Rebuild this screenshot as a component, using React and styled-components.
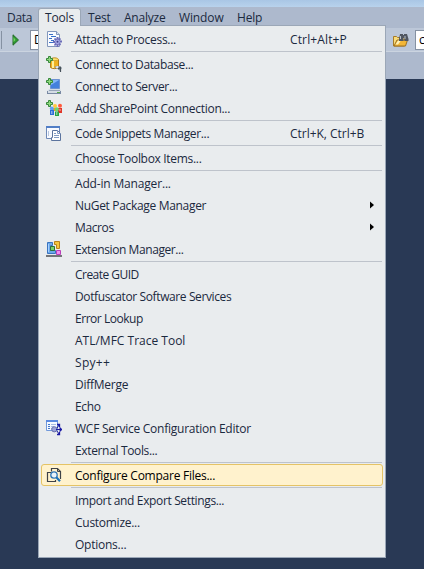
import React from 'react';
import styled, { createGlobalStyle } from 'styled-components';

const GlobalStyle = createGlobalStyle`
  * { box-sizing: border-box; }
  body { margin: 0; overflow: hidden; background: #293955; }
`;

const Window = styled.div`
  position: relative;
  width: 424px;
  height: 569px;
  overflow: hidden;
  background: #293955;
  color: #1b293e;
  font: 12px/22px 'Open Sans', 'Noto Sans', sans-serif;
  white-space: pre;
`;

const TitleStrip = styled.div`
  height: 7px;
  background: linear-gradient(#a9c6e5, #b8d2ec);
`;

const MenuBar = styled.nav`
  display: flex;
  height: 21px;
  padding-top: 1px;
  background: #adb9cd;
`;

const MenuTitle = styled.div`
  width: ${(p) => p.$width}px;
  height: 20px;
  padding-left: 6px;
  line-height: 17px;
  letter-spacing: ${(p) => p.$spacing}px;
  border: 1px solid ${(p) => (p.$open ? '#9ba7b7' : 'transparent')};
  border-bottom: 0;
  border-radius: 3px 3px 0 0;
  background: ${(p) => (p.$open ? '#e9ecee' : 'transparent')};
`;

const ToolBar = styled.div`
  display: flex;
  align-items: center;
  justify-content: space-between;
  height: 24px;
  background: #bcc7d8;
  border-bottom: 1px solid #cbd4e0;
`;

const ToolGroup = styled.div`
  display: flex;
  align-items: center;
  gap: ${(p) => p.$gap}px;
`;

const Divider = styled.div`
  width: 1px;
  height: 18px;
  margin-left: 1px;
  background: #8591a2;
`;

const ComboBox = styled.div`
  width: ${(p) => p.$width}px;
  height: 20px;
  padding-left: 3px;
  overflow: hidden;
  border: 1px solid #8591a2;
  border-right: 0;
  background: #fff;
  color: #000;
  line-height: 18px;
`;

const ToolShelf = styled.div`
  height: 27px;
  background: #adb9cd;
`;

const Menu = styled.div`
  position: absolute;
  left: 38px;
  top: 25px;
  width: 348px;
  height: 533px;
  padding: 2px;
  border: 1px solid #9ba7b7;
  background: #e9ecee;
`;

const TabJoin = styled.div`
  position: absolute;
  left: 0;
  top: -1px;
  width: 41px;
  height: 1px;
  background: #e9ecee;
`;

const Row = styled.div`
  display: grid;
  grid-template-columns: 16px 215px 1fr;
  grid-template-rows: 100%;
  column-gap: 13px;
  align-items: center;
  height: 22px;
  padding-left: ${(p) => (p.$active ? 4 : 5)}px;
  border: ${(p) => (p.$active ? '1px solid #e5c365' : '0')};
  border-radius: 3px;
  background: ${(p) => (p.$active ? '#fff2cd' : 'transparent')};
  color: ${(p) => (p.$active ? '#000' : 'inherit')};
`;

const Label = styled.span`
  padding-top: 2px;
  line-height: 20px;
  letter-spacing: ${(p) => p.$spacing}px;
`;

const Shortcut = styled(Label)`
  margin-left: -13px;
`;

const Separator = styled.div`
  height: 1px;
  margin: 1px 1px 1px 30px;
  background: #bec3cb;
`;

const Svg = styled.svg`
  display: block;
`;

const Arrow = styled(Svg)`
  margin-left: 67px;
`;

const Plus = () => (
  <path d="M2.5.5h2v2h2v2h-2v2h-2v-2h-2v-2h2z" fill="#8fda7d" stroke="#36873a" />
);

const icons = {
  attach: (
    <>
      <path d="M1.5.5h9l3 3v12h-12z" fill="#f9fbff" stroke="#8297bd" />
      <path d="M10.5.5v3h3" fill="#d7dfed" stroke="#8297bd" />
      <path d="M3 3.5h4M5 5.5h5M3 7.5h3M5 9.5h3M3 11.5h4" stroke="#3870c8" />
      <path d="M10.5 6h2v1.5l1.5-.5 1 1-1 1.5h2v2h-2l1 2-1 1-1.5-1V16h-2v-2.5L9 15l-1-1 1-2H7v-2h2L8 8l1-1 1.5 1z" fill="#6b6cb8" />
      <circle cx="11.5" cy="10.8" r="2.4" fill="#a5a9e4" />
      <circle cx="11.5" cy="10.8" r="1" fill="#41428d" />
    </>
  ),
  database: (
    <>
      <path d="M4.5 3.5c1-2 7-2 8 0v8c-2 1.5-6 1.5-8 0z" fill="#efb321" stroke="#b27b17" />
      <path d="M6 5h2v7H6z" fill="#fff09b" />
      <ellipse cx="8.5" cy="3.3" rx="3.8" ry="1.3" fill="#ffe378" stroke="#c99a27" strokeWidth=".7" />
      <path d="M8 11l2-1h4l2 2-2 3-2-2z" fill="#8b969f" />
      <path d="M9.5 11l2-1 1 1-1.5 1.5z" fill="#eef1f4" />
      <path d="M12 13l3-2M14.5 12v4" stroke="#46515a" strokeWidth="1.2" />
      <Plus />
    </>
  ),
  server: (
    <>
      <path d="M4.5 1.5h9v9h-9z" fill="#4480dc" stroke="#6d93d2" />
      <path d="M5 2h8L5 7z" fill="#85b7f5" />
      <path d="M3 11h11l1 2v3H1v-3z" fill="#d4dce5" />
      <path d="M1 15.5h14M1.5 13v2M14.5 13v2" stroke="#7989a3" />
      <path d="M3 12.5h11" stroke="#96a5b9" />
      <path d="M11 14.5h3" stroke="#55a949" />
      <Plus />
    </>
  ),
  sharepoint: (
    <>
      <circle cx="14" cy="5.8" r="2" fill="#ff5a3c" />
      <path d="M12 8h4v5h-4z" fill="#e03628" />
      <circle cx="9" cy="6" r="2" fill="#ffc83b" />
      <path d="M7 8h4v3H7z" fill="#e8a723" />
      <circle cx="5.8" cy="8.5" r="2" fill="#5da1f6" />
      <path d="M4 10h4v5H4z" fill="#2c6cd6" />
      <circle cx="10.8" cy="9.3" r="2" fill="#6ed374" />
      <path d="M9 11.5h4V16H9z" fill="#26a343" />
      <path d="M5.8 11v3M10.8 12v3M14 9v2" stroke="#fff" strokeOpacity=".65" />
      <Plus />
    </>
  ),
  snippets: (
    <>
      <path d="M.5 1.5h13v12H.5z" fill="#f8faff" stroke="#6e89b7" />
      <path d="M0 1h14v2H0z" fill="#517ec6" />
      <path d="M2.5 6v5" stroke="#b8c7df" />
      <path d="M6.5 5.5h5l3 3v7h-9v-3h1z" fill="#fff" stroke="#5c749e" />
      <path d="M11.5 5.5v3h3M8 8.5h2M8 10.5h5M8 12.5h5" stroke="#839cc4" />
    </>
  ),
  extension: (
    <>
      <path d="M1.5 1.5h5v3h-2v5h5v3h-8z" fill="#6ca8ea" stroke="#3a74c0" />
      <path d="M2.5 3v8" stroke="#a6d1ff" />
      <path d="M8.5.5h5v7h-3v-4h-2z" fill="#f4c63f" stroke="#b9831a" />
      <path d="M4.5 5.5h4v4h-4z" fill="#76d16d" stroke="#2c713a" />
      <path d="M10.5 9.5h4v4h-4z" fill="#f292f0" stroke="#ba3eba" />
      <path d="M0 14h16v2H0z" fill="#737579" />
    </>
  ),
  wcf: (
    <>
      <path d="M.5.5h11v10H.5z" fill="#f5f9ff" stroke="#7199db" />
      <path d="M0 0h12v2H0z" fill="#5b8ae0" />
      <path d="M2 4.5h2M2 6.5h2M2 8.5h2" stroke="#4277cb" />
      <path d="M5 4.5h5M5 6.5h3M5 8.5h3" stroke="#a7bde5" />
      <circle cx="8.3" cy="9.3" r="2.6" fill="#9ba2d8" stroke="#666fae" />
      <path d="M10 9.5h5M11 8l2-3M11 11l2 3" stroke="#1c1b9b" />
      <path d="M11 4.5h2.5V7M13.5 7.5l2 2-2 2M11 14.5h2.5V12" stroke="#1918a5" strokeWidth="1.3" />
    </>
  ),
  compare: (
    <>
      <path d="M5 5.5H1.5v9h8V13" stroke="#3e4248" strokeWidth="1.2" />
      <path d="M5.5 4.5v-3h6l3 3v7H14" stroke="#3e4248" strokeWidth="1.2" />
      <path d="M11.5 1.5v3h3" stroke="#3e4248" />
      <circle cx="8" cy="8" r="3.2" fill="#e8f3fa" stroke="#2d75b5" strokeWidth="1.3" />
      <path d="M10.3 10.3l3.7 4" stroke="#1972bb" strokeWidth="2.2" />
    </>
  ),
};

const Icon = ({ name }) => (
  <Svg width="16" height="16" viewBox="0 0 16 16" fill="none">{icons[name]}</Svg>
);

const titles = [
  ['Data', 38, -0.33], ['Tools', 43, -0.16, true], ['Test', 36, -0.2],
  ['Analyze', 55, -0.22], ['Window', 58, -0.12], ['Help', 40, -0.2],
];

const groups = [
  [{ text: 'Attach to Process...', s: -0.27, icon: 'attach', keys: 'Ctrl+Alt+P', ks: 0.13 }],
  [
    { text: 'Connect to Database...', s: -0.36, icon: 'database' },
    { text: 'Connect to Server...', s: -0.35, icon: 'server' },
    { text: 'Add SharePoint Connection...', s: -0.29, icon: 'sharepoint' },
  ],
  [{ text: 'Code Snippets Manager...', s: -0.35, icon: 'snippets', keys: 'Ctrl+K, Ctrl+B', ks: -0.02 }],
  [{ text: 'Choose Toolbox Items...', s: -0.31 }],
  [
    { text: 'Add-in Manager...', s: -0.17 },
    { text: 'NuGet Package Manager', s: -0.32, more: true },
    { text: 'Macros', s: -0.38, more: true },
    { text: 'Extension Manager...', s: -0.42, icon: 'extension' },
  ],
  [
    { text: 'Create GUID', s: -0.53 },
    { text: 'Dotfuscator Software Services', s: -0.39 },
    { text: 'Error Lookup', s: -0.46 },
    { text: 'ATL/MFC Trace Tool', s: 0 },
    { text: 'Spy++', s: 0.3 },
    { text: 'DiffMerge', s: -0.25 },
    { text: 'Echo', s: -0.35 },
    { text: 'WCF Service Configuration Editor', s: -0.25, icon: 'wcf' },
    { text: 'External Tools...', s: -0.35 },
  ],
  [{ text: 'Configure Compare Files...', s: -0.25, icon: 'compare', active: true }],
  [
    { text: 'Import and Export Settings...', s: -0.36 },
    { text: 'Customize...', s: -0.27 },
    { text: 'Options...', s: -0.24 },
  ],
];

const MenuRow = ({ item }) => (
  <Row $active={item.active}>
    {item.icon ? <Icon name={item.icon} /> : <span />}
    <Label $spacing={item.s}>{item.text}</Label>
    {item.keys && <Shortcut $spacing={item.ks}>{item.keys}</Shortcut>}
    {item.more && (
      <Arrow width="4" height="8" viewBox="0 0 4 8"><path d="M0 .5L4 4 0 7.5z" fill="#000" /></Arrow>
    )}
  </Row>
);

export default function App() {
  return (
    <>
      <GlobalStyle />
      <Window>
        <TitleStrip />
        <MenuBar>
          {titles.map(([text, width, spacing, open]) => (
            <MenuTitle key={text} $width={width} $spacing={spacing} $open={open}>{text}</MenuTitle>
          ))}
        </MenuBar>
        <ToolBar>
          <ToolGroup $gap={10}>
            <Divider />
            <Svg width="8" height="12" viewBox="0 0 8 12">
              <path d="M1 .8L6.5 6 1 11.2z" fill="#2e9b30" stroke="#256b2b" />
              <path d="M1.5 3v5l2-2z" fill="#78d467" />
            </Svg>
            <ComboBox $width={30}>D</ComboBox>
          </ToolGroup>
          <ToolGroup $gap={6}>
            <Divider />
            <Svg width="17" height="16" viewBox="0 0 17 16">
              <path d="M1.5 14V4.5h3l1 1h7V14z" fill="#f9dc7b" stroke="#a67b28" />
              <path d="M2 14l3-6h10.500l-2 6z" fill="#f3b637" stroke="#9d7223" />
              <path d="M3.500 12.500l2.500-4h3l-3 4z" fill="#fff2b8" />
              <path d="M8 2h3v1h1V2h3l1.500 5v2h-4V6h-1v3H7V7z" fill="#505660" />
              <path d="M8.500 4v3M13 4v3" stroke="#b5bdc7" />
            </Svg>
            <ComboBox $width={9}>c</ComboBox>
          </ToolGroup>
        </ToolBar>
        <ToolShelf />
        <Menu>
          <TabJoin />
          {groups.map((group, i) => (
            <React.Fragment key={group[0].text}>
              {i > 0 && <Separator />}
              {group.map((item) => <MenuRow key={item.text} item={item} />)}
            </React.Fragment>
          ))}
        </Menu>
      </Window>
    </>
  );
}
